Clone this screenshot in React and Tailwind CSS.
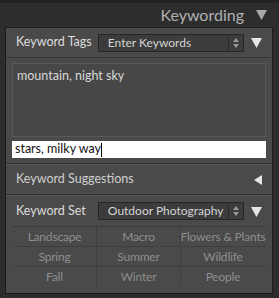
import React from "react";

const font = { fontFamily: "Lato, 'Open Sans', sans-serif" };

function Stepper() {
  return (
    <div className="w-[14px] h-[14px] border-l border-[#2a2a2a] flex flex-col items-center justify-center gap-[2px]">
      <svg width="6" height="4" viewBox="0 0 6 4"><path d="M0 4 L3 0 L6 4Z" fill="#9a9a9a" /></svg>
      <svg width="6" height="4" viewBox="0 0 6 4"><path d="M0 0 L3 4 L6 0Z" fill="#9a9a9a" /></svg>
    </div>
  );
}

function Dropdown({ value }) {
  return (
    <div className="w-[148px] h-[18px] bg-[#3c3c3c] border border-[#262626] flex items-center justify-between pl-[9px] pr-[1px]">
      <span className="text-[12px] text-[#d4d4d4] leading-none whitespace-nowrap">{value}</span>
      <Stepper />
    </div>
  );
}

function DownTri() {
  return (
    <svg width="11" height="11" viewBox="0 0 11 11"><path d="M0 1 L11 1 L5.5 11Z" fill="#e6e6e6" /></svg>
  );
}

const presets = [
  "Landscape", "Macro", "Flowers & Plants",
  "Spring", "Summer", "Wildlife",
  "Fall", "Winter", "People",
];

export default function App() {
  return (
    <div className="w-[279px] h-[298px] bg-[#2d2d2d] border-t-[3px] border-[#232323]" style={font}>
      {/* Header */}
      <div className="h-[24px] flex items-center justify-end pr-[12px] gap-[12px]">
        <span className="text-[16px] text-[#b0b0b0] leading-none">Keywording</span>
        <svg width="11" height="10" viewBox="0 0 11 10"><path d="M0 0 L11 0 L5.5 10Z" fill="#a8a8a8" /></svg>
      </div>

      <div className="ml-[5px] w-[268px] border border-[#1c1c1c] bg-[#4a4a4a]">
        {/* Keyword Tags */}
        <div className="h-[30px] flex items-center pl-[10px] pr-[10px] border-b border-[#363636]">
          <span className="w-[83px] text-[12.5px] text-[#dcdcdc] whitespace-nowrap">Keyword Tags</span>
          <Dropdown value="Enter Keywords" />
          <span className="ml-[7px]"><DownTri /></span>
        </div>

        {/* keyword text area */}
        <div className="px-[6px] pt-[5px] pb-[5px] border-b border-[#2e2e2e]">
          <div className="h-[74px] border border-[#595959] bg-[#474747] px-[4px] pt-[3px] text-[12.5px] text-[#d8d8d8]">
            mountain, night sky
          </div>
          <div className="mt-[4px] h-[17px] bg-white flex items-center pl-[3px] text-[12.5px] text-[#111]">
            stars, milky way<span className="w-[1px] h-[14px] bg-black" />
          </div>
        </div>

        {/* Suggestions */}
        <div className="h-[31px] flex items-center justify-between pl-[10px] pr-[10px] border-b border-[#2e2e2e] border-t border-t-[#565656]">
          <span className="text-[12.5px] text-[#cfcfcf]">Keyword Suggestions</span>
          <svg width="8" height="10" viewBox="0 0 8 10"><path d="M8 0 L8 10 L0 5Z" fill="#e6e6e6" /></svg>
        </div>

        {/* Keyword Set */}
        <div className="h-[31px] flex items-center pl-[10px] pr-[10px] border-t border-[#565656]">
          <span className="w-[83px] text-[12.5px] text-[#dcdcdc] whitespace-nowrap">Keyword Set</span>
          <Dropdown value="Outdoor Photography" />
          <span className="ml-[7px]"><DownTri /></span>
        </div>

        <div className="mx-[7px] mb-[6px] border-t border-[#3a3a3a] grid grid-cols-3">
          {presets.map((p, i) => (
            <div
              key={p}
              className={`h-[20px] flex items-center justify-center text-[12px] leading-none whitespace-nowrap tracking-[-0.2px] text-[#8e8e8e] ${i < 6 ? "border-b border-[#3e3e3e]" : ""} ${i % 3 !== 2 ? "border-r border-[#3e3e3e]" : ""}`}
            >
              {p}
            </div>
          ))}
        </div>
      </div>
    </div>
  );
}
